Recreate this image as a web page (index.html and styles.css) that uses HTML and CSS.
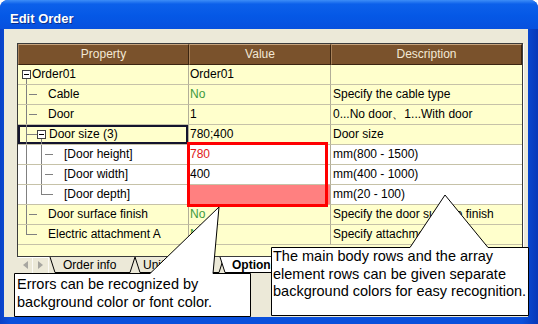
FILE: index.html
```html
<!DOCTYPE html>
<html lang="en">
<head>
    <meta charset="UTF-8">
    <title>Edit Order</title>
    <link rel="stylesheet" href="styles.css">
</head>
<body>
    <div class="window">
        <div class="titlebar">Edit Order</div>

        <div class="client">
            <div class="grid">
                <div class="row head">
                    <div class="cell">Property</div>
                    <div class="cell">Value</div>
                    <div class="cell">Description</div>
                </div>

                <div class="row main">
                    <div class="cell prop"><span class="tree t-root"><span class="expander"></span></span>Order01</div>
                    <div class="cell val">Order01</div>
                    <div class="cell desc"></div>
                </div>
                <div class="row main">
                    <div class="cell prop"><span class="tree t-tee"></span>Cable</div>
                    <div class="cell val v-ok">No</div>
                    <div class="cell desc">Specify the cable type</div>
                </div>
                <div class="row main">
                    <div class="cell prop"><span class="tree t-tee"></span>Door</div>
                    <div class="cell val">1</div>
                    <div class="cell desc">0...No door、1...With door</div>
                </div>
                <div class="row main">
                    <div class="cell prop focus"><span class="tree t-branch"><span class="expander"></span></span>Door size (3)</div>
                    <div class="cell val">780;400</div>
                    <div class="cell desc">Door size</div>
                </div>
                <div class="row item">
                    <div class="cell prop"><span class="tree t-leaf"></span>[Door height]</div>
                    <div class="cell val v-err">780</div>
                    <div class="cell desc">mm(800 - 1500)</div>
                </div>
                <div class="row item">
                    <div class="cell prop"><span class="tree t-leaf"></span>[Door width]</div>
                    <div class="cell val">400</div>
                    <div class="cell desc">mm(400 - 1000)</div>
                </div>
                <div class="row item">
                    <div class="cell prop"><span class="tree t-leaf-end"></span>[Door depth]</div>
                    <div class="cell val v-bad"></div>
                    <div class="cell desc">mm(20 - 100)</div>
                </div>
                <div class="row main">
                    <div class="cell prop"><span class="tree t-tee"></span>Door surface finish</div>
                    <div class="cell val v-ok">No</div>
                    <div class="cell desc">Specify the door surface finish</div>
                </div>
                <div class="row main">
                    <div class="cell prop"><span class="tree t-end"></span>Electric attachment A</div>
                    <div class="cell val v-ok">No</div>
                    <div class="cell desc">Specify attachment A</div>
                </div>
            </div>

            <div class="tabs">
                <svg class="tab-shapes" width="506" height="17" viewBox="0 0 506 17">
                    <polygon points="118,0 123,15.5 202,15.5 207,0" fill="#ece9d8"/>
                    <polyline points="118,0 123,15.5 202,15.5 207,0" fill="none" stroke="#000"/>
                    <polygon points="33,0 38,15.5 113,15.5 118,0" fill="#ece9d8"/>
                    <polyline points="33,0 38,15.5 113,15.5 118,0" fill="none" stroke="#000"/>
                    <polygon points="203,0 208,15.5 280,15.5 285,0" fill="#fff"/>
                    <polyline points="203,0 208,15.5 280,15.5 285,0" fill="none" stroke="#000"/>
                </svg>
                <div class="tab-labels">
                    <div class="tab-nav">
                        <span class="nav-btn"><span class="arrow-left"></span></span>
                        <span class="nav-btn"><span class="arrow-right"></span></span>
                    </div>
                    <span class="tab-label first">Order info</span>
                    <span class="tab-label second">Unit info</span>
                    <span class="tab-label active">Options</span>
                </div>
            </div>
        </div>

        <!-- annotations over the dialog -->
        <div class="error-frame"></div>
        <svg class="callouts" width="538" height="324" viewBox="0 0 538 324">
            <path d="M14.5 273.5 H150 L219 207 L213 273.5 H250.5 V316.5 H14.5 Z" fill="#fff" stroke="#000"/>
            <path d="M271.5 247.5 H410 L445 195 L488 247.5 H528.5 V315.5 H271.5 Z" fill="#fff" stroke="#000"/>
        </svg>
        <p class="note note-errors">Errors can be recognized by<br>background color or font color.</p>
        <p class="note note-rows">The main body rows and the array<br>element rows can be given separate<br>background colors for easy recognition.</p>
    </div>
</body>
</html>
```

FILE: styles.css
```css
* {
    margin: 0;
    padding: 0;
    box-sizing: border-box;
}

body {
    background: #fff;
    font-family: "Liberation Sans", Arial, sans-serif;
    font-size: 12px;
    color: #000;
}

.window {
    position: relative;
    width: 538px;
    height: 324px;
    background: linear-gradient(90deg, #0842c8 0%, #0a50dc 2%, #0a50dc 97%, #0838b8 100%);
    border-radius: 8px 8px 0 0;
    display: flex;
    flex-direction: column;
    overflow: hidden;
}

.titlebar {
    height: 29px;
    padding: 10px 0 0 10px;
    line-height: 17px;
    font-size: 13px;
    font-weight: bold;
    color: #fff;
    text-shadow: 1px 1px 0 #0a2d8a;
    background: linear-gradient(180deg, #3d8df7 0%, #0c60ea 14%, #0558e6 55%, #0750de 100%);
}

.client {
    flex: 1;
    margin: 0 10px 7px 4px;
    background: #ece9d8;
    padding: 14px 5px 0 13px;
}

/* property grid */
.grid {
    width: 506px;
    height: 214px;
    border: 1px solid #3b3b3b;
    background: #ffffcc;
    box-shadow: 1px 1px 0 #fff;
}

.row {
    display: grid;
    grid-template-columns: 171px 142px 191px;
}

.row.main {
    background: #ffffcc;
}

.row.item {
    background: #fff;
}

.cell {
    height: 20px;
    line-height: 19px;
    border-bottom: 1px solid #c6c2a8;
    border-right: 1px solid #b2ae98;
    white-space: nowrap;
    overflow: hidden;
}

.row .cell:last-child {
    border-right: none;
}

.head .cell {
    height: 21px;
    line-height: 19px;
    text-align: center;
    color: #f3e8d4;
    background: #7a522c;
    border-top: 1px solid #c6a47e;
    border-left: 1px solid #a9825a;
    border-right: 1px solid #3a2410;
    border-bottom: 1px solid #3a2410;
}

.head .cell:last-child {
    border-right: 1px solid #3a2410;
}

.val {
    padding-left: 1px;
}

.desc {
    padding-left: 2px;
}

.v-ok {
    color: #3d9a3d;
}

.v-err {
    color: #e01818;
}

.v-bad {
    background: #ff8080;
}

.prop {
    display: flex;
}

.focus {
    box-shadow: inset 0 0 0 2px #14142e;
}

/* tree connectors */
.tree {
    flex: none;
    align-self: stretch;
    display: flex;
    align-items: center;
}

.expander {
    width: 9px;
    height: 9px;
    border: 1px solid #404040;
    background: linear-gradient(#000, #000) center / 5px 1px no-repeat, #fff;
}

.t-root {
    width: 14px;
    padding-left: 4px;
    background: linear-gradient(#808080, #808080) 8px 100% / 1px 50% no-repeat;
}

.t-tee {
    width: 30px;
    background:
        linear-gradient(#808080, #808080) 8px 0 / 1px 100% no-repeat,
        linear-gradient(#808080, #808080) 11px 50% / 8px 1px no-repeat;
}

.t-end {
    width: 30px;
    background:
        linear-gradient(#808080, #808080) 8px 0 / 1px 10px no-repeat,
        linear-gradient(#808080, #808080) 8px 50% / 11px 1px no-repeat;
}

.t-branch {
    width: 31px;
    padding-left: 19px;
    background:
        linear-gradient(#808080, #808080) 8px 0 / 1px 100% no-repeat,
        linear-gradient(#808080, #808080) 8px 50% / 11px 1px no-repeat,
        linear-gradient(#808080, #808080) 23px 100% / 1px 50% no-repeat;
}

.t-leaf {
    width: 46px;
    background:
        linear-gradient(#808080, #808080) 8px 0 / 1px 100% no-repeat,
        linear-gradient(#808080, #808080) 23px 0 / 1px 100% no-repeat,
        linear-gradient(#808080, #808080) 27px 50% / 8px 1px no-repeat;
}

.t-leaf-end {
    width: 46px;
    background:
        linear-gradient(#808080, #808080) 8px 0 / 1px 100% no-repeat,
        linear-gradient(#808080, #808080) 23px 0 / 1px 10px no-repeat,
        linear-gradient(#808080, #808080) 23px 50% / 12px 1px no-repeat;
}

/* sheet tabs */
.tabs {
    display: grid;
    width: 506px;
    height: 17px;
}

.tabs > * {
    grid-area: 1 / 1;
}

.tab-labels {
    display: flex;
    align-items: center;
    height: 16px;
    line-height: 16px;
}

.tab-nav {
    display: flex;
    margin-left: 2px;
    height: 15px;
}

.nav-btn {
    display: flex;
    align-items: center;
    justify-content: center;
    width: 14px;
    border-right: 1px solid #fbfaf5;
}

.nav-btn + .nav-btn {
    width: 16px;
}

.arrow-left {
    width: 0;
    height: 0;
    border-style: solid;
    border-width: 4px 5px 4px 0;
    border-color: transparent #a7a6a0 transparent transparent;
}

.arrow-right {
    width: 0;
    height: 0;
    border-style: solid;
    border-width: 4px 0 4px 5px;
    border-color: transparent transparent transparent #a7a6a0;
}

.tab-label {
    flex: none;
}

.tab-label.first {
    margin-left: 14px;
    width: 80px;
}

.tab-label.second {
    width: 89px;
}

.tab-label.active {
    font-weight: bold;
}

/* annotations */
.error-frame {
    position: absolute;
    left: 187px;
    top: 142px;
    width: 141px;
    height: 65px;
    border: 3px solid #ff0000;
}

.callouts {
    position: absolute;
    left: 0;
    top: 0;
}

.note {
    position: absolute;
    font-size: 14.5px;
    line-height: 18px;
    white-space: nowrap;
    color: #000;
}

.note-errors {
    left: 17px;
    top: 275px;
}

.note-rows {
    left: 273px;
    top: 248px;
    line-height: 17.5px;
}
```
